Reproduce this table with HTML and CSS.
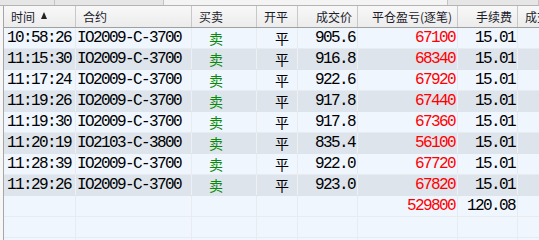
FILE: index.html
```html
<!DOCTYPE html>
<html>
<head>
<meta charset="utf-8">
<link rel="stylesheet" href="styles.css">
</head>
<body>
<div class="frame">
  <div class="tabstrip">
    <span class="tab t1"></span><span class="tab t2"></span><span class="tab t3"></span><span class="tab t4"></span>
  </div>
  <div class="grid">
    <div class="row head">
      <div class="c c1 l">时间 <span class="arrow"></span></div>
      <div class="c c2 l">合约</div>
      <div class="c c3 l">买卖</div>
      <div class="c c4 l">开平</div>
      <div class="c c5 r">成交价</div>
      <div class="c c6 r">平仓盈亏(逐笔)</div>
      <div class="c c7 r">手续费</div>
      <div class="c c8 l">成交</div>
    </div>
    <div class="row odd">
      <div class="c c1 m">10:58:26</div><div class="c c2 m">IO2009-C-3700</div><div class="c c3 cn sell">卖</div><div class="c c4 cn">平</div><div class="c c5 m r">905.6</div><div class="c c6 m r red">67100</div><div class="c c7 m r">15.01</div><div class="c c8"></div>
    </div>
    <div class="row even">
      <div class="c c1 m">11:15:30</div><div class="c c2 m">IO2009-C-3700</div><div class="c c3 cn sell">卖</div><div class="c c4 cn">平</div><div class="c c5 m r">916.8</div><div class="c c6 m r red">68340</div><div class="c c7 m r">15.01</div><div class="c c8"></div>
    </div>
    <div class="row odd">
      <div class="c c1 m">11:17:24</div><div class="c c2 m">IO2009-C-3700</div><div class="c c3 cn sell">卖</div><div class="c c4 cn">平</div><div class="c c5 m r">922.6</div><div class="c c6 m r red">67920</div><div class="c c7 m r">15.01</div><div class="c c8"></div>
    </div>
    <div class="row even">
      <div class="c c1 m">11:19:26</div><div class="c c2 m">IO2009-C-3700</div><div class="c c3 cn sell">卖</div><div class="c c4 cn">平</div><div class="c c5 m r">917.8</div><div class="c c6 m r red">67440</div><div class="c c7 m r">15.01</div><div class="c c8"></div>
    </div>
    <div class="row odd">
      <div class="c c1 m">11:19:30</div><div class="c c2 m">IO2009-C-3700</div><div class="c c3 cn sell">卖</div><div class="c c4 cn">平</div><div class="c c5 m r">917.8</div><div class="c c6 m r red">67360</div><div class="c c7 m r">15.01</div><div class="c c8"></div>
    </div>
    <div class="row even">
      <div class="c c1 m">11:20:19</div><div class="c c2 m">IO2103-C-3800</div><div class="c c3 cn sell">卖</div><div class="c c4 cn">平</div><div class="c c5 m r">835.4</div><div class="c c6 m r red">56100</div><div class="c c7 m r">15.01</div><div class="c c8"></div>
    </div>
    <div class="row odd">
      <div class="c c1 m">11:28:39</div><div class="c c2 m">IO2009-C-3700</div><div class="c c3 cn sell">卖</div><div class="c c4 cn">平</div><div class="c c5 m r">922.0</div><div class="c c6 m r red">67720</div><div class="c c7 m r">15.01</div><div class="c c8"></div>
    </div>
    <div class="row even">
      <div class="c c1 m">11:29:26</div><div class="c c2 m">IO2009-C-3700</div><div class="c c3 cn sell">卖</div><div class="c c4 cn">平</div><div class="c c5 m r">923.0</div><div class="c c6 m r red">67820</div><div class="c c7 m r">15.01</div><div class="c c8"></div>
    </div>
    <div class="row odd">
      <div class="c c1"></div><div class="c c2"></div><div class="c c3"></div><div class="c c4"></div><div class="c c5"></div><div class="c c6 m r red">529800</div><div class="c c7 m r">120.08</div><div class="c c8"></div>
    </div>
    <div class="row odd">
      <div class="c c1"></div><div class="c c2"></div><div class="c c3"></div><div class="c c4"></div><div class="c c5"></div><div class="c c6"></div><div class="c c7"></div><div class="c c8"></div>
    </div>
    <div class="row odd">
      <div class="c c1"></div><div class="c c2"></div><div class="c c3"></div><div class="c c4"></div><div class="c c5"></div><div class="c c6"></div><div class="c c7"></div><div class="c c8"></div>
    </div>
  </div>
</div>
</body>
</html>
```
FILE: styles.css
```css
html, body {
  margin: 0;
  padding: 0;
  background: #f7f7f7;
  overflow: hidden;
}
.frame {
  width: 539px;
  height: 240px;
  overflow: hidden;
}
.tabstrip {
  height: 5px;
  background: #e6e6e6;
  border-bottom: 1px solid #b4b4b4;
  display: flex;
}
.tab {
  border-right: 1px solid #c4c4c4;
}
.t1 { width: 54px; }
.t2 { width: 108px; }
.t3 { width: 283px; background: #f4f4f4; }
.t4 { width: 90px; }
.grid {
  margin-left: 3px;
  border-left: 1px solid #a6a6a6;
  width: 700px;
}
.row {
  display: grid;
  grid-template-columns: 72px 116px 65px 41px 60px 100px 60px 120px;
  height: 21px;
  box-sizing: border-box;
  border-bottom: 1px solid #e8ebef;
}
.row.head {
  height: 22px;
  background: linear-gradient(#f8f8f8, #ececec);
  border-bottom: 1px solid #a0a0a0;
}
.row.odd { background: #f0f6fe; }
.row.even { background: #dee4eb; border-bottom-color: #dee4eb; }
.c {
  box-sizing: border-box;
  border-right: 1px solid #e8ebef;
  display: flex;
  align-items: center;
  white-space: nowrap;
  overflow: hidden;
  color: #000;
}
.row.even .c { border-right-color: #eef1f4; }
.head .c {
  font-family: "Noto Sans CJK SC", sans-serif;
  font-size: 12px;
  color: #1c1c2c;
  border-right: 1px solid #c8c8c8;
  padding-bottom: 1px;
}
.head .c.l { padding-left: 7px; }
.head .c.r { justify-content: flex-end; padding-right: 5px; }
.head .c1 { padding-left: 8px; }
.head .c3 { padding-left: 5px; }
.head .c4 { padding-left: 6px; }
.arrow {
  display: inline-block;
  width: 0;
  height: 0;
  border-left: 3.5px solid transparent;
  border-right: 3.5px solid transparent;
  border-bottom: 7px solid #222;
  margin-left: 6px;
  margin-top: -1px;
}
.m {
  font-family: "Liberation Mono", monospace;
  font-size: 16px;
  letter-spacing: -1.6px;
  padding-left: 3px;
  padding-bottom: 1px;
}
.c2.m { padding-left: 1px; }
.m.r { justify-content: flex-end; padding-right: 2px; padding-left: 0; letter-spacing: -1.6px; }
.cn {
  font-family: "Noto Sans CJK SC", sans-serif;
  font-size: 14px;
  padding-bottom: 1px;
}
.c3.cn { padding-left: 17px; }
.c4.cn { padding-left: 18px; }
.sell { color: #0a8a0a; }
.red { color: #ff0000; }
```
